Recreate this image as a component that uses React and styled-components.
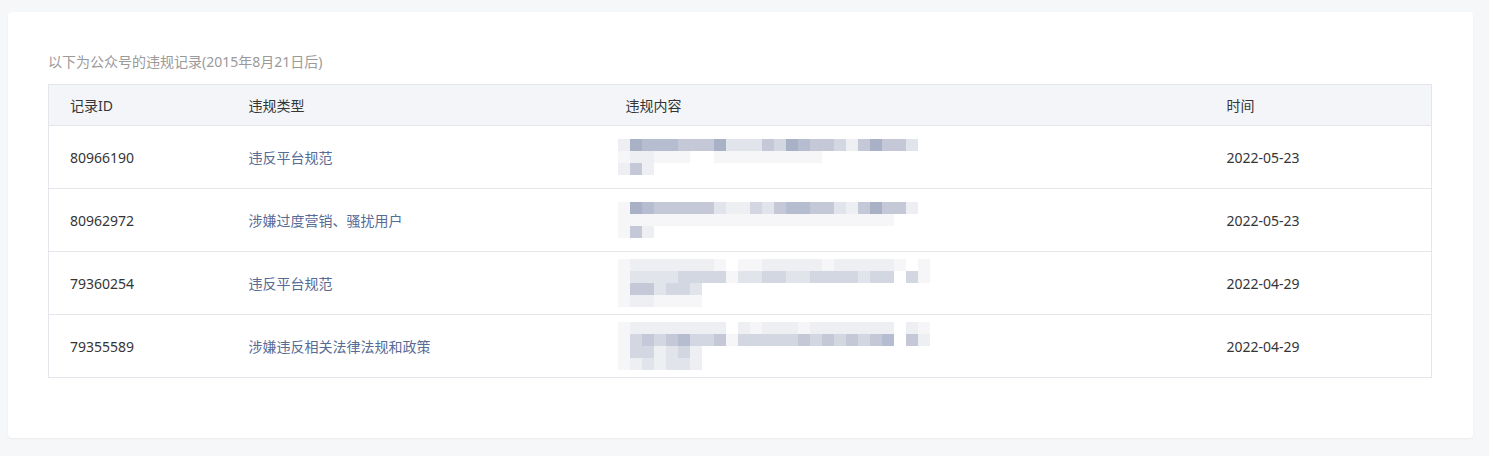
import React from "react";
import styled, { createGlobalStyle } from "styled-components";

const shades = {
  a: "#a9b1c7",
  b: "#b6bdd0",
  c: "#c4c8d7",
  d: "#d3d7e2",
  e: "#e2e4ec",
  f: "#eeeff3",
  g: "#f6f6f8",
};

const records = [
  {
    id: "80966190",
    type: "违反平台规范",
    time: "2022-05-23",
    blur: ["fabbbcccaeeecdabccdfcacce", "gffggg..ggggggggg........", "fcf"],
  },
  {
    id: "80962972",
    type: "涉嫌过度营销、骚扰用户",
    time: "2022-05-23",
    blur: ["gabccccceffdecbbccefcaccf", "ggggggggggggggggggggggg..", "gcf"],
  },
  {
    id: "79360254",
    type: "违反平台规范",
    time: "2022-04-29",
    blur: [
      "gfffffffg.ggfffffgfffffg.g",
      "geeeeddddgeeddeeddddedd.dg",
      "gccedde",
      "gffgggg",
    ],
  },
  {
    id: "79355589",
    type: "涉嫌违反相关法律法规和政策",
    time: "2022-04-29",
    blur: [
      "gffffffff.fgfffgfffffff.fg",
      "gdcdcbddcgdddddcdcdcdcb.cf",
      "gddfedf",
      "gfefeef",
    ],
  },
];

const Mosaic = ({ lines }) => {
  const cols = Math.max(...lines.map((l) => l.length));
  return (
    <MosaicSvg
      width={cols * 12}
      height={lines.length * 12}
      viewBox={`0 0 ${cols * 12} ${lines.length * 12}`}
      shapeRendering="crispEdges"
    >
      {lines.map((line, y) =>
        line.split("").map((ch, x) =>
          shades[ch] ? (
            <rect
              key={`${x}-${y}`}
              x={x * 12}
              y={y * 12}
              width="12"
              height="12"
              fill={shades[ch]}
            />
          ) : null
        )
      )}
    </MosaicSvg>
  );
};

const App = () => {
  return (
    <>
      <GlobalStyle />
      <Card>
        <Title>以下为公众号的违规记录(2015年8月21日后)</Title>
        <Table>
          <colgroup>
            <col style={{ width: 179 }} />
            <col style={{ width: 377 }} />
            <col style={{ width: 601 }} />
            <col />
          </colgroup>
          <thead>
            <tr>
              <Th>记录ID</Th>
              <Th>违规类型</Th>
              <Th>违规内容</Th>
              <Th>时间</Th>
            </tr>
          </thead>
          <tbody>
            {records.map((r) => (
              <tr key={r.id}>
                <Td>{r.id}</Td>
                <Td $link>{r.type}</Td>
                <Td>
                  <Mosaic lines={r.blur} />
                </Td>
                <Td>{r.time}</Td>
              </tr>
            ))}
          </tbody>
        </Table>
      </Card>
    </>
  );
};

export default App;

const GlobalStyle = createGlobalStyle`
  html, body {
    margin: 0;
    padding: 0;
    background: #f6f7f9;
    font-family: "Noto Sans", "Noto Sans CJK SC", sans-serif;
  }
  body {
    padding: 12px 16px 18px 8px;
  }
`;

const Card = styled.div`
  background: #fff;
  border-radius: 4px;
  box-shadow: 0 1px 2px rgba(0, 0, 0, 0.05);
  padding: 40px 41px 60px 40px;
`;

const Title = styled.div`
  font-size: 14px;
  line-height: 20px;
  color: #9a9a9a;
  margin-bottom: 12px;
`;

const Table = styled.table`
  width: 100%;
  border-collapse: collapse;
  table-layout: fixed;
  border: 1px solid #e4e6eb;
  font-size: 14px;
  color: #353535;
`;

const Th = styled.th`
  height: 40px;
  padding: 0 21px;
  background: #f4f5f8;
  border-bottom: 1px solid #e4e6eb;
  font-weight: normal;
  text-align: left;
  color: #353535;
`;

const Td = styled.td`
  height: 62px;
  padding: 0 21px;
  border-bottom: 1px solid #e4e6eb;
  color: ${(p) => (p.$link ? "#576b95" : "#353535")};
  vertical-align: middle;
`;

const MosaicSvg = styled.svg`
  display: block;
  margin-left: -8px;
`;
